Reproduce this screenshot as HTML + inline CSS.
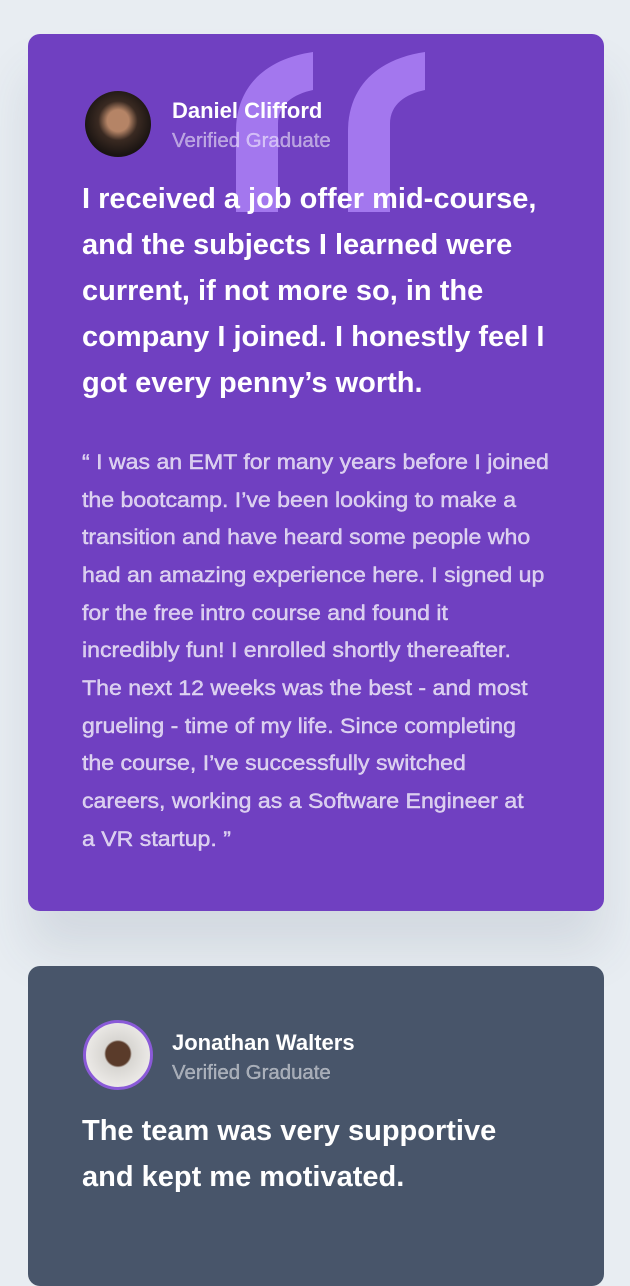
<!DOCTYPE html>
<html><head><style>
*{margin:0;padding:0;box-sizing:border-box}
body{width:630px;height:1242px;background:#e8edf2;font-family:"Liberation Sans",sans-serif;overflow:hidden;position:relative}
.card{position:absolute;left:28px;width:576px;border-radius:12px;overflow:hidden}
.c1{top:34px;height:877px;background:#7040c1;box-shadow:0 40px 50px rgba(60,70,100,0.12)}
.c2{top:966px;height:320px;background:#48556a}
.l{position:absolute;left:54px;white-space:nowrap;transform-origin:0 0}
.av{position:absolute;border-radius:50%}
.nm{font-weight:bold;font-size:22px;color:#fff;transform:scaleX(1)}
.vg{font-size:20px;color:rgba(255,255,255,.5);transform:scaleX(1.02);-webkit-text-stroke:0.3px rgba(255,255,255,.5)}
.h{font-weight:bold;font-size:29px;color:#fff;transform:scaleX(1)}
.b{font-size:21px;color:rgba(255,255,255,.72);transform:scaleX(1.1);-webkit-text-stroke:0.4px rgba(255,255,255,.72)}
</style></head><body>
<div class="card c1">
<svg style="position:absolute;left:208px;top:18px" width="190" height="160" viewBox="0 0 190 160"><g fill="#a377ee"><path d="M77 0V38C58 42 42 52 42 72V160H0V80C0 30 35 6 77 0Z"/><path d="M189 0V38C170 42 154 52 154 72V160H112V80C112 30 147 6 189 0Z"/></g></svg>
<div class="av" style="left:57px;top:57px;width:66px;height:66px;background:radial-gradient(circle at 50% 45%,#b58466 0 22%,#3a2a22 40%,#1a1412 70%)"></div>
<div class="l nm" style="left:144px;top:64px">Daniel Clifford</div>
<div class="l vg" style="left:144px;top:96px">Verified Graduate</div>
<div class="l h" style="top:149px">I received a job offer mid-course,</div>
<div class="l h" style="top:195px">and the subjects I learned were</div>
<div class="l h" style="top:241px">current, if not more so, in the</div>
<div class="l h" style="top:287px">company I joined. I honestly feel I</div>
<div class="l h" style="top:333px">got every penny’s worth.</div>
<div class="l b" style="top:417px">“ I was an EMT for many years before I joined</div>
<div class="l b" style="top:455px">the bootcamp. I’ve been looking to make a</div>
<div class="l b" style="top:492px">transition and have heard some people who</div>
<div class="l b" style="top:530px">had an amazing experience here. I signed up</div>
<div class="l b" style="top:568px">for the free intro course and found it</div>
<div class="l b" style="top:605px">incredibly fun! I enrolled shortly thereafter.</div>
<div class="l b" style="top:643px">The next 12 weeks was the best - and most</div>
<div class="l b" style="top:681px">grueling - time of my life. Since completing</div>
<div class="l b" style="top:718px">the course, I’ve successfully switched</div>
<div class="l b" style="top:756px">careers, working as a Software Engineer at</div>
<div class="l b" style="top:794px">a VR startup. ”</div>
</div>
<div class="card c2">
<div class="av" style="left:55px;top:54px;width:70px;height:70px;border:3px solid #8a5ad8;background:radial-gradient(circle at 50% 48%,#5a3b2a 0 26%,#d8d6d2 30%,#ebe9e6 70%)"></div>
<div class="l nm" style="left:144px;top:64px">Jonathan Walters</div>
<div class="l vg" style="left:144px;top:96px">Verified Graduate</div>
<div class="l h" style="top:149px">The team was very supportive</div>
<div class="l h" style="top:195px">and kept me motivated.</div>
</div>
</body></html>
